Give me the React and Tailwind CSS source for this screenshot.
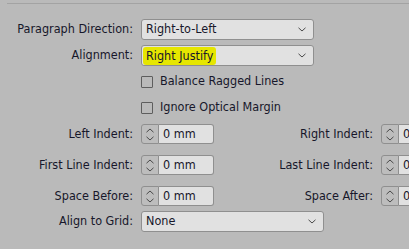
import React from 'react'

const font = { fontFamily: '"DejaVu Sans Condensed", "DejaVu Sans", Tahoma, sans-serif' }

function Chevron({ className }) {
    return (
        <svg width="8" height="5" viewBox="0 0 8 5" className={className}>
            <path d="M0.5 0.8 L4 4 L7.5 0.8" fill="none" stroke="#4a4a4a" strokeWidth="1" />
        </svg>
    )
}

function Select({ value, width, highlight }) {
    return (
        <div
            className="flex items-center justify-between h-[21px] pl-[4px] pr-[7px] bg-[#e1e1e1] border border-[#8f8f8f] rounded-[3px]"
            style={{ width }}
        >
            {highlight ? (
                <span className="-ml-[3px] px-[3px] bg-[#e6e600] rounded-[3px] leading-[18px]">{value}</span>
            ) : (
                <span>{value}</span>
            )}
            <Chevron />
        </div>
    )
}

function Spinner({ value }) {
    return (
        <div className="flex h-[20px] w-[73px] shrink-0">
            <div className="flex flex-col items-center justify-center gap-[3px] w-[18px] border border-[#8f8f8f] rounded-l-[3px] bg-[#bdbdbd]">
                <Chevron className="rotate-180" />
                <Chevron />
            </div>
            <div className="flex items-center flex-1 pl-[4px] bg-[#e1e1e1] border border-l-0 border-[#8f8f8f] rounded-r-[3px]">
                {value}
            </div>
        </div>
    )
}

function Label({ children, width }) {
    return (
        <div className="text-right shrink-0 pr-[8px] whitespace-nowrap" style={{ width }}>
            {children}
        </div>
    )
}

function Check({ label }) {
    return (
        <div className="flex items-center h-[21px] pl-[141px]">
            <div className="w-[12px] h-[12px] border border-[#5e5e5e] rounded-[1px]" />
            <span className="ml-[7px]">{label}</span>
        </div>
    )
}

export default function App() {
    return (
        <div className="w-[409px] h-[249px] overflow-hidden bg-[#bababa] text-[12.5px] text-[#17172a]" style={font}>
            <div className="mt-[3px] ml-[7px] h-px bg-[#a3a3a3]" />
            <div className="flex flex-col">
                <div className="flex items-center mt-[15px]">
                    <Label width="141px">Paragraph Direction:</Label>
                    <Select value="Right-to-Left" width="173px" />
                </div>
                <div className="flex items-center mt-[5px]">
                    <Label width="141px">Alignment:</Label>
                    <Select value="Right Justify" width="173px" highlight />
                </div>
                <div className="mt-[5px]">
                    <Check label="Balance Ragged Lines" />
                </div>
                <div className="mt-[5px]">
                    <Check label="Ignore Optical Margin" />
                </div>
                <div className="flex items-center mt-[6px]">
                    <Label width="141px">Left Indent:</Label>
                    <Spinner value="0 mm" />
                    <Label width="167px">Right Indent:</Label>
                    <Spinner value="0 mm" />
                </div>
                <div className="flex items-center mt-[11px]">
                    <Label width="141px">First Line Indent:</Label>
                    <Spinner value="0 mm" />
                    <Label width="167px">Last Line Indent:</Label>
                    <Spinner value="0 mm" />
                </div>
                <div className="flex items-center mt-[11px]">
                    <Label width="141px">Space Before:</Label>
                    <Spinner value="0 mm" />
                    <Label width="167px">Space After:</Label>
                    <Spinner value="0 mm" />
                </div>
                <div className="flex items-center mt-[5px]">
                    <Label width="141px">Align to Grid:</Label>
                    <Select value="None" width="183px" />
                </div>
            </div>
        </div>
    )
}
